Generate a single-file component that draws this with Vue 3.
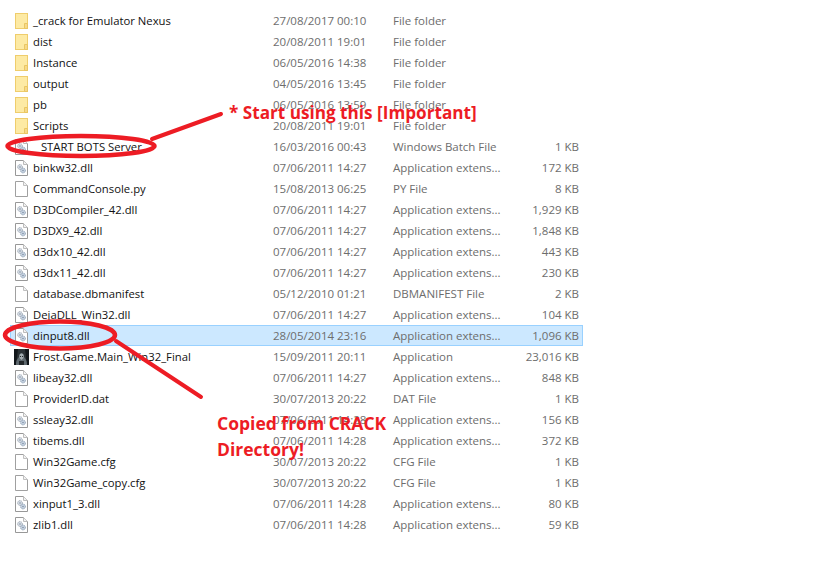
<script setup>
const rows = [
  ['folder', '_crack for Emulator Nexus', '27/08/2017 00:10', 'File folder', ''],
  ['folder', 'dist', '20/08/2011 19:01', 'File folder', ''],
  ['folder', 'Instance', '06/05/2016 14:38', 'File folder', ''],
  ['folder', 'output', '04/05/2016 13:45', 'File folder', ''],
  ['folder', 'pb', '06/05/2016 13:59', 'File folder', ''],
  ['folder', 'Scripts', '20/08/2011 19:01', 'File folder', ''],
  ['dll', '_ START BOTS Server', '16/03/2016 00:43', 'Windows Batch File', '1 KB'],
  ['dll', 'binkw32.dll', '07/06/2011 14:27', 'Application extens...', '172 KB'],
  ['blank', 'CommandConsole.py', '15/08/2013 06:25', 'PY File', '8 KB'],
  ['dll', 'D3DCompiler_42.dll', '07/06/2011 14:27', 'Application extens...', '1,929 KB'],
  ['dll', 'D3DX9_42.dll', '07/06/2011 14:27', 'Application extens...', '1,848 KB'],
  ['dll', 'd3dx10_42.dll', '07/06/2011 14:27', 'Application extens...', '443 KB'],
  ['dll', 'd3dx11_42.dll', '07/06/2011 14:27', 'Application extens...', '230 KB'],
  ['blank', 'database.dbmanifest', '05/12/2010 01:21', 'DBMANIFEST File', '2 KB'],
  ['dll', 'DejaDLL_Win32.dll', '07/06/2011 14:27', 'Application extens...', '104 KB'],
  ['dll', 'dinput8.dll', '28/05/2014 23:16', 'Application extens...', '1,096 KB', true],
  ['app', 'Frost.Game.Main_Win32_Final', '15/09/2011 20:11', 'Application', '23,016 KB'],
  ['dll', 'libeay32.dll', '07/06/2011 14:27', 'Application extens...', '848 KB'],
  ['blank', 'ProviderID.dat', '30/07/2013 20:22', 'DAT File', '1 KB'],
  ['dll', 'ssleay32.dll', '07/06/2011 14:28', 'Application extens...', '156 KB'],
  ['dll', 'tibems.dll', '07/06/2011 14:28', 'Application extens...', '372 KB'],
  ['blank', 'Win32Game.cfg', '30/07/2013 20:22', 'CFG File', '1 KB'],
  ['blank', 'Win32Game_copy.cfg', '30/07/2013 20:22', 'CFG File', '1 KB'],
  ['dll', 'xinput1_3.dll', '07/06/2011 14:28', 'Application extens...', '80 KB'],
  ['dll', 'zlib1.dll', '07/06/2011 14:28', 'Application extens...', '59 KB'],
].map(([icon, name, date, type, size, selected]) => ({ icon, name, date, type, size, selected }))
</script>

<template>
  <div class="page">
    <div class="list">
      <div v-for="r in rows" :key="r.name" class="row" :class="{ selected: r.selected }">
        <span class="icon">
          <svg v-if="r.icon === 'folder'" width="13" height="16" viewBox="0 0 13 16">
            <rect x=".5" y=".5" width="12" height="15" fill="#fdeaa4" stroke="#efcd6c" />
            <path d="M9.5 15.5V10.5H12.5V15.5Z" fill="#f7d98a" stroke="#e9c663" />
          </svg>
          <svg v-else-if="r.icon === 'blank'" width="13" height="16" viewBox="0 0 13 16">
            <path d="M.5 .5H8.5L12.5 4.5V15.5H.5Z" fill="#fff" stroke="#a0a0a0" />
            <path d="M8.5 .5V4.5H12.5" fill="#f2f2f2" stroke="#c0c0c0" />
          </svg>
          <svg v-else-if="r.icon === 'dll'" width="13" height="16" viewBox="0 0 13 16">
            <path d="M.5 .5H8.5L12.5 4.5V15.5H.5Z" fill="#fff" stroke="#989898" />
            <path d="M8.5 .5V4.5H12.5" fill="#f2f2f2" stroke="#bcbcbc" />
            <circle cx="5" cy="7" r="2.4" fill="#d7dde5" stroke="#a2acb8" stroke-dasharray="1.2 .6" />
            <circle cx="8" cy="10.5" r="2.4" fill="#c9d5e3" stroke="#8ea0b5" stroke-dasharray="1.2 .6" />
            <circle cx="5" cy="7" r=".8" fill="#7f90a5" />
            <circle cx="8" cy="10.5" r=".8" fill="#7f90a5" />
          </svg>
          <svg v-else width="15" height="16" viewBox="0 0 15 16">
            <rect width="15" height="16" fill="#2b3236" />
            <path d="M0 0H4L2 16H0ZM11 0H15V16H13Z" fill="#11161a" />
            <path d="M2 16C2 11 4 9 5 8C5 3 10 3 10 8C11 9 13 11 13 16Z" fill="#5e686e" />
            <path d="M5.5 6C6 4 9 4 9.5 6L9.5 9L7.5 11L5.5 9Z" fill="#a3adb1" />
            <path d="M6 7H7V8H6ZM8 7H9V8H8ZM5 12H10V16H5Z" fill="#23282b" />
          </svg>
        </span>
        <span class="name">{{ r.name }}</span>
        <span class="date">{{ r.date }}</span>
        <span class="type">{{ r.type }}</span>
        <span class="size">{{ r.size }}</span>
      </div>
    </div>

    <svg class="marks" width="840" height="573" viewBox="0 0 840 573" fill="none" stroke="#ed1c24" stroke-linecap="round" stroke-linejoin="round">
      <ellipse cx="81" cy="146" rx="73.5" ry="10" stroke-width="4.5" />
      <path d="M152 139L221 114" stroke-width="4" />
      <ellipse cx="60" cy="335" rx="55" ry="13.5" stroke-width="4.5" />
      <path d="M116 341L201 397" stroke-width="4" />
    </svg>

    <div class="note note-top">* Start using this [Important]</div>
    <div class="note note-bottom">Copied from CRACK<br />Directory!</div>
  </div>
</template>

<style>
html, body { margin: 0; background: #fff; }
</style>

<style scoped>
.page {
  position: relative;
  width: 840px;
  height: 573px;
  overflow: hidden;
  background: #fff;
  font-family: "Open Sans", "Noto Sans", sans-serif;
}
.list {
  display: flex;
  flex-direction: column;
  width: 573px;
  margin-left: 10px;
  padding-top: 10px;
}
.row {
  display: grid;
  grid-template-columns: 23px 240px 120px 1fr 66px;
  align-items: center;
  height: 21px;
  box-sizing: border-box;
  font-size: 11.5px;
  color: #6d6d6d;
  white-space: nowrap;
}
.row > span:not(.icon) {
  position: relative;
  top: -0.5px;
}
.row.selected {
  background: #cce8ff;
  outline: 1px solid #99d1ff;
  outline-offset: -1px;
}
.icon {
  display: flex;
  justify-content: center;
}
.name { color: #111; font-size: 11.3px; }
.size { text-align: right; padding-right: 4px; }
.marks {
  position: absolute;
  inset: 0;
  pointer-events: none;
}
.note {
  position: absolute;
  color: #ed1c24;
  font-weight: 700;
  white-space: nowrap;
}
.note-top { left: 229px; top: 101px; font-size: 17.15px; }
.note-bottom { left: 217px; top: 410px; font-size: 17.5px; line-height: 26px; }
</style>
